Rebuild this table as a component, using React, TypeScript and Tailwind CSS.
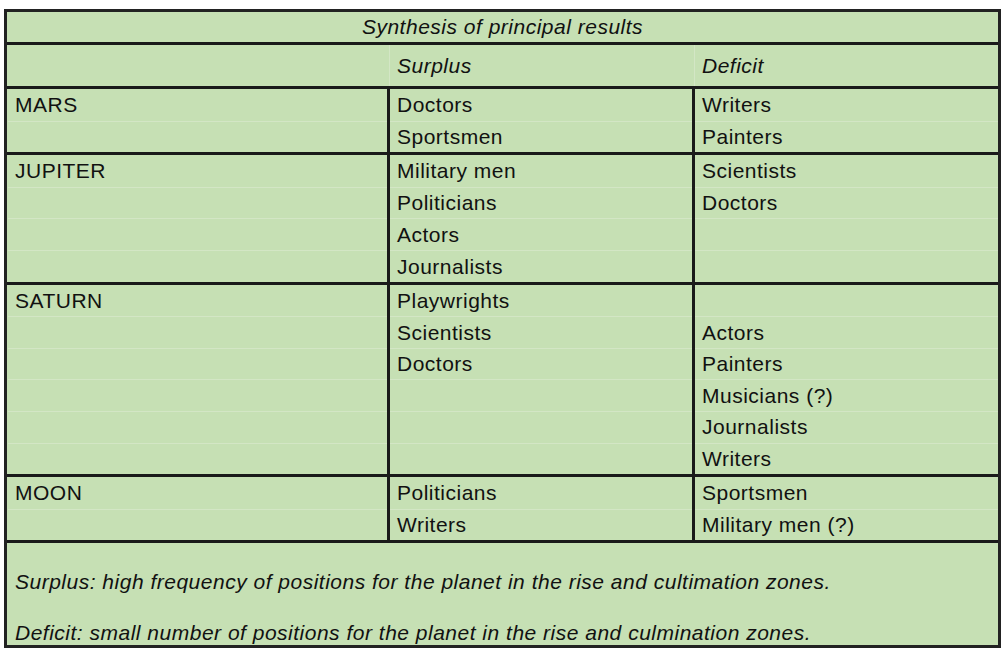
/**
 * Synthesis table — planets vs. professions (surplus / deficit)
 */

type Section = { planet: string; surplus: string[]; deficit: string[]; rows: number };

const sections: Section[] = [
    { planet: 'MARS', surplus: ['Doctors', 'Sportsmen'], deficit: ['Writers', 'Painters'], rows: 2 },
    {
        planet: 'JUPITER',
        surplus: ['Military men', 'Politicians', 'Actors', 'Journalists'],
        deficit: ['Scientists', 'Doctors'],
        rows: 4,
    },
    {
        planet: 'SATURN',
        surplus: ['Playwrights', 'Scientists', 'Doctors'],
        deficit: ['', 'Actors', 'Painters', 'Musicians (?)', 'Journalists', 'Writers'],
        rows: 6,
    },
    { planet: 'MOON', surplus: ['Politicians', 'Writers'], deficit: ['Sportsmen', 'Military men (?)'], rows: 2 },
];

function Column({ items, rows, className }: { items: string[]; rows: number; className: string }) {
    return (
        <div className={className}>
            {Array.from({ length: rows }).map((_, i) => (
                <div
                    key={i}
                    className={`h-[31.6px] flex items-center pl-[7px] ${i > 0 ? 'border-t border-[#d3e6c5]' : ''}`}
                >
                    {items[i] ?? ''}
                </div>
            ))}
        </div>
    );
}

export default function App() {
    return (
        <div className="min-h-screen bg-white pt-[9px] pl-[4px]">
            <div
                className="w-[997px] border-[3px] border-[#222] bg-[#c6e0b4] text-[21px] tracking-[0.5px] text-[#111]"
                style={{ fontFamily: '"Liberation Sans", Arial, sans-serif' }}
            >
                {/* title */}
                <div className="h-[33px] border-b-[3px] border-[#1a1a1a] flex items-center justify-center italic">
                    Synthesis of principal results
                </div>

                {/* column headers */}
                <div className="h-[44px] border-b-[3px] border-[#1a1a1a] flex items-center italic">
                    <div className="w-[383px] h-full border-r border-[#d3e6c5]" />
                    <div className="w-[305px] h-full flex items-center pl-[7px] border-r border-[#d3e6c5]">
                        Surplus
                    </div>
                    <div className="flex-1 pl-[7px]">Deficit</div>
                </div>

                {/* planets */}
                {sections.map((s) => (
                    <div key={s.planet} className="flex border-b-[3px] border-[#1a1a1a]">
                        <Column
                            items={[s.planet]}
                            rows={s.rows}
                            className="w-[383px] border-r-[3px] border-[#1a1a1a] pl-[1px]"
                        />
                        <Column items={s.surplus} rows={s.rows} className="w-[305px] border-r-[3px] border-[#1a1a1a]" />
                        <Column items={s.deficit} rows={s.rows} className="flex-1" />
                    </div>
                ))}

                {/* footnote */}
                <div className="pl-[8px] italic leading-[25.5px] h-[102px]">
                    <div>&nbsp;</div>
                    <div>Surplus: high frequency of positions for the planet in the rise and cultimation zones.</div>
                    <div>&nbsp;</div>
                    <div>Deficit: small number of positions for the planet in the rise and culmination zones.</div>
                </div>
            </div>
        </div>
    );
}
